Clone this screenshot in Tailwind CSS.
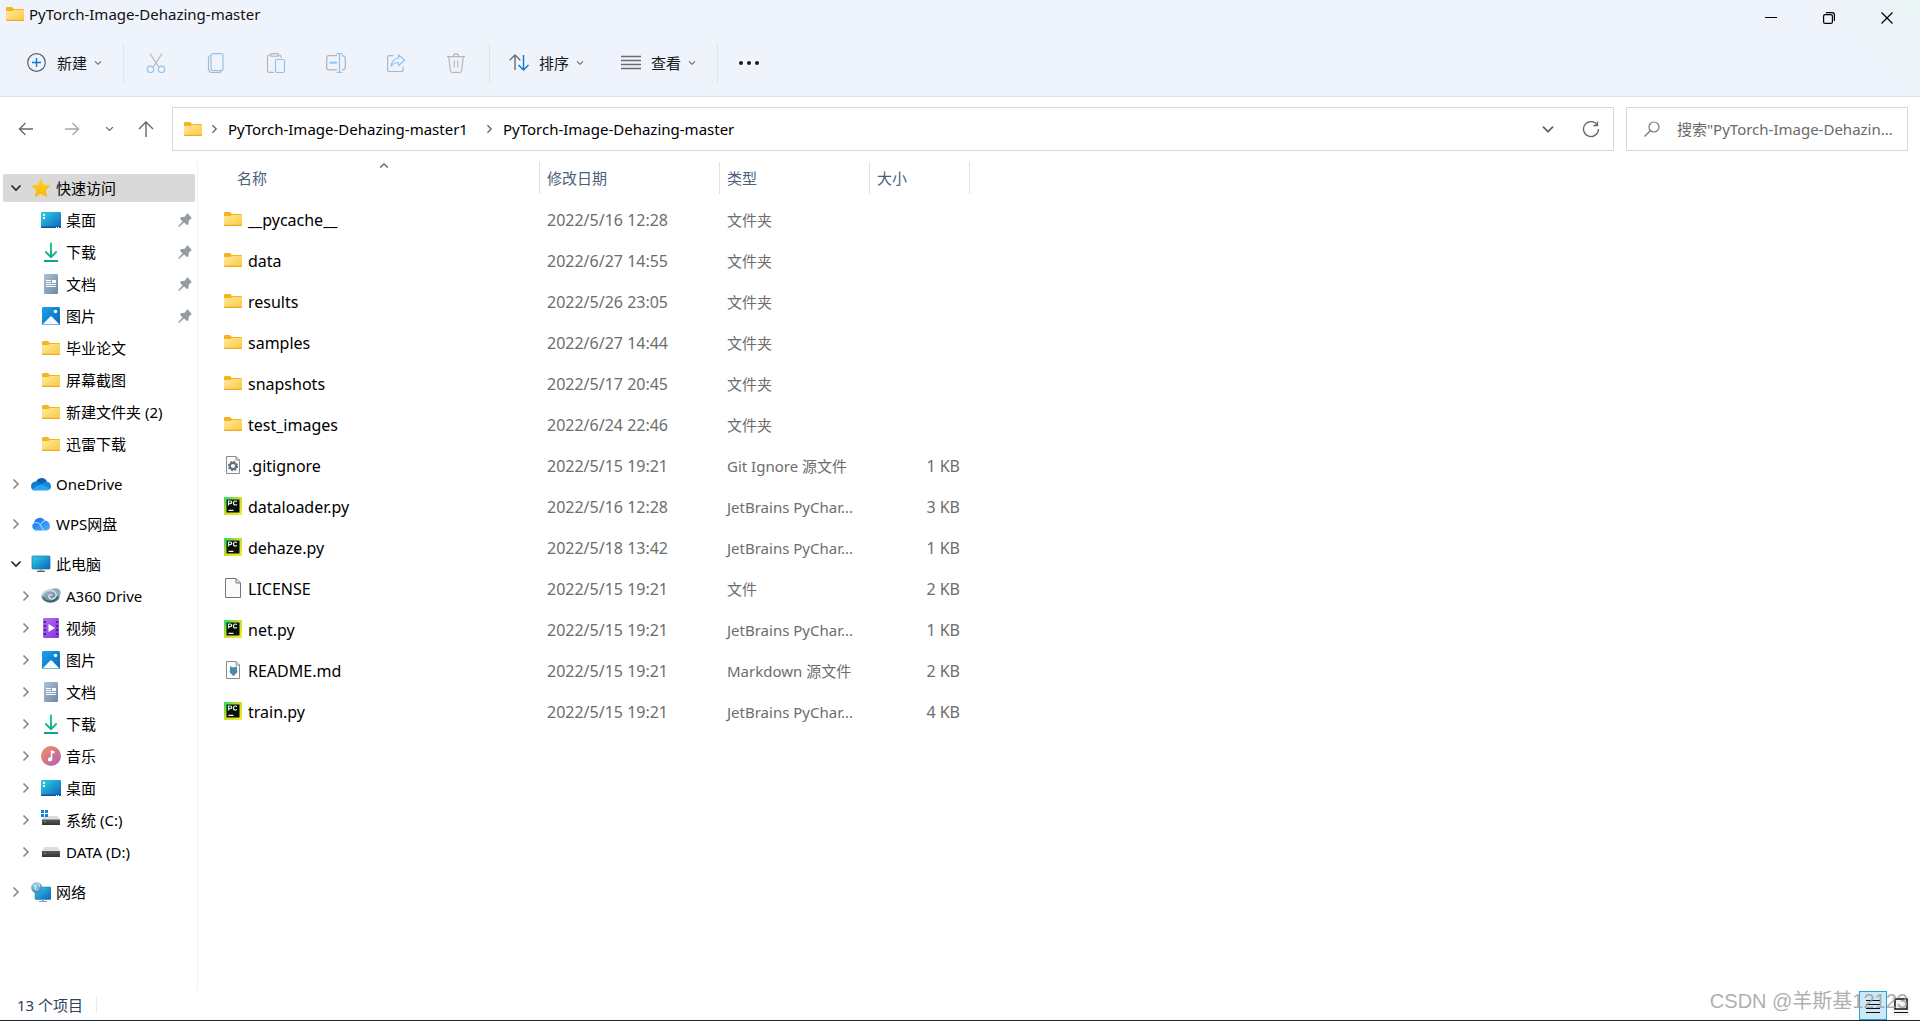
<!DOCTYPE html>
<html lang="zh-CN">
<head>
<meta charset="utf-8">
<meta name="viewport" content="width=device-width, initial-scale=1">
<title>PyTorch-Image-Dehazing-master</title>
<script src="https://cdn.jsdelivr.net/npm/@tailwindcss/browser@4"></script>
</head>
<body class="relative flex min-h-screen flex-col bg-white font-['Noto_Sans','Noto_Sans_CJK_SC',sans-serif] text-[15px] leading-5 text-black">

<!-- Icon library -->
<svg class="absolute size-0" aria-hidden="true">
  <defs>
    <linearGradient id="g-folder" x1="0" y1="0" x2="1" y2="1"><stop offset="0" stop-color="#ffe9a0"/><stop offset="1" stop-color="#fdc83e"/></linearGradient>
    <linearGradient id="g-desk" x1="0" y1="0" x2="1" y2="1"><stop offset="0" stop-color="#30d2e6"/><stop offset="1" stop-color="#0a63bd"/></linearGradient>
    <linearGradient id="g-pic" x1="0" y1="0" x2="1" y2="1"><stop offset="0" stop-color="#1ba4ec"/><stop offset="1" stop-color="#0866b8"/></linearGradient>
    <linearGradient id="g-doc" x1="0" y1="0" x2="1" y2="1"><stop offset="0" stop-color="#afc2d6"/><stop offset="1" stop-color="#6c86a5"/></linearGradient>
    <linearGradient id="g-down" gradientUnits="userSpaceOnUse" x1="0" y1="0" x2="0" y2="20"><stop offset="0" stop-color="#33cf8c"/><stop offset="1" stop-color="#0f9f94"/></linearGradient>
    <linearGradient id="g-video" x1="0" y1="0" x2="1" y2="1"><stop offset="0" stop-color="#b66cf2"/><stop offset="1" stop-color="#8236e0"/></linearGradient>
    <linearGradient id="g-music" x1="0" y1="0" x2="1" y2="1"><stop offset="0" stop-color="#f79259"/><stop offset="1" stop-color="#ae5bbb"/></linearGradient>
    <linearGradient id="g-star" x1="0" y1="0" x2="0" y2="1"><stop offset="0" stop-color="#ffd21c"/><stop offset="1" stop-color="#fbb50f"/></linearGradient>
    <linearGradient id="g-pc" x1="0" y1="0" x2="1" y2="1"><stop offset="0" stop-color="#12e36a"/><stop offset=".45" stop-color="#c6dc2c"/><stop offset="1" stop-color="#f4ee2c"/></linearGradient>
    <linearGradient id="g-wps" x1="0" y1="0" x2="1" y2="1"><stop offset="0" stop-color="#0a6df5"/><stop offset="1" stop-color="#55b1fb"/></linearGradient>
    <linearGradient id="g-drive" x1="0" y1="0" x2="0" y2="1"><stop offset="0" stop-color="#5a5a5a"/><stop offset="1" stop-color="#343434"/></linearGradient>
    <radialGradient id="g-globe" cx=".4" cy=".3" r=".8"><stop offset="0" stop-color="#a5d6ea"/><stop offset="1" stop-color="#2a7fae"/></radialGradient>
    <linearGradient id="g-a360" x1="0" y1="0" x2="1" y2="1"><stop offset="0" stop-color="#b5c9d3"/><stop offset="1" stop-color="#446b80"/></linearGradient>
  </defs>
  <symbol id="i-folder" viewBox="0 0 18 18"><path d="M0 3.200Q0 2 1.200 2H6l2 2h9q1 0 1 1v5H0z" fill="#f7b31c"/><path d="M0 6h6.500L8 5h10v10q0 1-1 1H1q-1 0-1-1z" fill="url(#g-folder)"/><path d="M0 14.800q0 1.200 1 1.200h16q1 0 1-1.200z" fill="#efa926"/></symbol>
  <symbol id="i-desktop" viewBox="0 0 20 20"><rect y="2" width="20" height="16" rx="1.200" fill="url(#g-desk)"/><path d="M0 16.500h20v.5q0 1-1 1H1q-1 0-1-1z" fill="#0b5794"/><path d="M2 4h2v2H2zM2 7h2v2H2zM15 17h1v1h-1zM17 17h1v1h-1z" fill="#fff"/></symbol>
  <symbol id="i-download" viewBox="0 0 20 20" fill="none" stroke="url(#g-down)" stroke-width="2"><path d="M10 .5V15M4.300 9.500L10 15.200l5.700-5.700M3 19h14"/></symbol>
  <symbol id="i-document" viewBox="0 0 20 20"><rect x="3" y="0" width="14" height="20" rx="1.200" fill="url(#g-doc)"/><path d="M5 6h5v1H5zM5 8h5v1H5zM5 10h10v1H5zM5 12h10v1H5zM11 6h4v3h-4z" fill="#fff"/></symbol>
  <symbol id="i-picture" viewBox="0 0 20 20"><rect x="1" y="1" width="18" height="18" rx="1.200" fill="url(#g-pic)"/><path d="M2 18l7-7.300q1-1 2 0L18 18q-.3.500-1 .500H3q-.7 0-1-.500z" fill="#f3f9ff"/><circle cx="14.500" cy="5.500" r="1.700" fill="#fff"/></symbol>
  <symbol id="i-star" viewBox="0 0 20 20"><path d="M10 1.300l2.600 5.900 6.400.7-4.700 4.300 1.300 6.300L10 15.300l-5.600 3.200 1.300-6.300L1 7.900l6.400-.7z" fill="url(#g-star)" stroke="url(#g-star)" stroke-linejoin="round"/></symbol>
  <symbol id="i-pin" viewBox="0 0 14 14"><path d="M8.300.8q.7-.8 1.500 0l3.400 3.400q.8.800 0 1.500l-.7.300-1.600 1.600-.5 3.600-1.200 1.100-3.100-2.900-4.800 4.400L0 13.300l4.500-4.900-2.700-3L3 4.200l3.700-.5 1.400-1.600z" fill="#939ca3"/></symbol>
  <symbol id="i-onedrive" viewBox="0 0 20 20"><path d="M5 8.500a5.800 5.800 0 0 1 11-.8L8 14z" fill="#0f5fb4"/><path d="M4.500 7.500q4-.3 7.500 3.500L3 16.500Q0 15.500 0 12q.2-4 4.500-4.500z" fill="#1279d0"/><path d="M11 10q2-2.500 5-2.300 4 .8 4 4.800 0 2.300-1.500 3L9 12z" fill="#1588de"/><path d="M1.200 15Q5 11.700 10 10.500q4 1 9.300 4-1 2-3.300 2H4q-2 0-2.800-1.500z" fill="#2aa5ec"/></symbol>
  <symbol id="i-wps" viewBox="0 0 20 20"><path d="M3 9A6 6 0 0 1 14 6.500a5.500 5.500 0 0 1 5 5.500q0 4.500-4.500 4.500h-10A4.200 4.200 0 0 1 3 9z" fill="url(#g-wps)"/><path d="M3.500 9Q8 7.500 10 12q1 3 3 4.500M9.500 10.500Q11 7 14.500 6.500" stroke="#e3f1ff" stroke-width=".8" fill="none"/></symbol>
  <symbol id="i-pc" viewBox="0 0 20 20"><rect x="1" y="2" width="18" height="13" rx=".8" fill="url(#g-desk)" stroke="#1e6d9c" stroke-width=".7"/><path d="M8.500 15.500h3V17h-3z" fill="#9aa3aa"/><path d="M6 16.700h8V18H6z" fill="#58646d"/></symbol>
  <symbol id="i-a360" viewBox="0 0 20 20"><ellipse cx="9.500" cy="10" rx="9.300" ry="6.800" fill="url(#g-a360)"/><path d="M10 3q8-2.500 9.500 2.500.8 4-3.500 7.500 1-6-6-10z" fill="#8faab8"/><path d="M1.500 9Q4 3.500 10.500 4.500q5.500 1.500 4.500 5.500-2 4-6 2.500-2.500-2 0-3.500 1.500-.5 2.300.5" fill="none" stroke="#d4e0e6" stroke-width="1.500"/><path d="M2 11q2.500 5 8.500 4.300 5-1 6.500-5" fill="none" stroke="#365b70" stroke-width="1.500"/></symbol>
  <symbol id="i-video" viewBox="0 0 20 20"><rect x="2" width="16" height="20" rx="1.200" fill="url(#g-video)"/><path d="M7.500 6v8l6.500-4z" fill="#fff"/><path d="M3 3h2v2H3zM3 7h2v2H3zM3 11h2v2H3zM3 15h2v2H3zM15 3h2v2h-2zM15 7h2v2h-2zM15 11h2v2h-2zM15 15h2v2h-2z" fill="#4c2391"/></symbol>
  <symbol id="i-music" viewBox="0 0 20 20"><circle cx="10" cy="10" r="10" fill="url(#g-music)"/><path d="M9.800 4.200l3.700 1V7.500l-2.200-.6v6.300a2.200 2 0 1 1-1.500-1.800z" fill="#fff"/></symbol>
  <symbol id="i-cdrive" viewBox="0 0 20 20"><path d="M3.500 6h13L19 10H1z" fill="#dcdde1"/><rect x="1" y="9.500" width="18" height="5.500" fill="url(#g-drive)"/><circle cx="4" cy="11.800" r=".8" fill="#2fe33d"/><path d="M0 0h3v3H0zM4 0h3v3H4zM0 4h3v3H0zM4 4h3v3H4z" fill="#1685d8"/></symbol>
  <symbol id="i-ddrive" viewBox="0 0 20 20"><path d="M3.500 5h13L19 9.500H1z" fill="#dcdde1"/><rect x="1" y="9" width="18" height="6" fill="url(#g-drive)"/><circle cx="4" cy="11.500" r=".8" fill="#2fe33d"/></symbol>
  <symbol id="i-network" viewBox="0 0 20 20"><rect x="4" y="5" width="16" height="12.500" rx="1" fill="url(#g-desk)" stroke="#1b76ae" stroke-width=".5"/><path d="M11 17.500h2V19h-2zM8 19h8v1H8z" fill="#9aa3aa"/><circle cx="5.700" cy="5.700" r="5.500" fill="url(#g-globe)"/><path d="M2 3l3 1-1 3 3 1M6 1l3 2-1 2" fill="none" stroke="#e0f1f8" stroke-width=".9"/></symbol>
  <symbol id="i-gitignore" viewBox="0 0 18 18"><path d="M2.500.5h9.500l3.500 3.500v13.500h-13z" fill="#fcfcfc" stroke="#8b8b8b"/><path d="M12 .5V4h3.500" fill="none" stroke="#8b8b8b"/><circle cx="9" cy="10" r="3.200" fill="none" stroke="#5b7080" stroke-width="2.200"/><circle cx="9" cy="10" r="4.600" fill="none" stroke="#5b7080" stroke-width="1.200" stroke-dasharray="1.800 1.813"/></symbol>
  <symbol id="i-markdown" viewBox="0 0 18 18"><path d="M2.500.5h9.500l3.500 3.500v13.500h-13z" fill="#fcfcfc" stroke="#8b8b8b"/><path d="M12 .5V4h3.500" fill="none" stroke="#8b8b8b"/><path d="M6 5l2 1.200h3L13 5v5.500h1L9.500 15.200 5 10.500h1z" fill="#4a8bab"/></symbol>
  <symbol id="i-file" viewBox="0 0 18 20"><path d="M1.500.5H12l4.500 4.500v14.500h-15z" fill="#fafafa" stroke="#757575"/><path d="M12 .5V5h4.500" fill="none" stroke="#757575"/></symbol>
  <symbol id="i-pycharm" viewBox="0 0 18 18"><rect width="18" height="18" rx=".5" fill="url(#g-pc)"/><rect x="2.500" y="2.500" width="13" height="13" fill="#06110a"/><path d="M4.500 8.500V4h1.700q1.500 0 1.500 1.300T6.200 6.700H4.500M12.800 4.800Q12.200 4 11.200 4 9.500 4 9.500 6t1.700 2q1 0 1.600-.7M4.500 13.300h5" fill="none" stroke="#e9f3ea" stroke-width="1.200"/></symbol>
  <symbol id="i-right" viewBox="0 0 8 12"><path d="M1.500 1.500L6 6l-4.500 4.500" fill="none" stroke="currentColor" stroke-width="1.600"/></symbol>
  <symbol id="i-down" viewBox="0 0 12 8"><path d="M1.500 1.500L6 6l4.500-4.500" fill="none" stroke="currentColor" stroke-width="1.600"/></symbol>
</svg>

<header class="border-b border-[#d9dfe6] bg-[#eff3fb] bg-linear-[225deg] from-[#eaf5f6] from-0% to-[#eff3fb] to-5%">
  <div class="flex h-9 items-start justify-between">
    <h1 class="flex h-7 items-center gap-[5px] pl-1.5 text-[#111]">
      <svg class="size-[18px]"><use href="#i-folder"/></svg>PyTorch-Image-Dehazing-master
    </h1>
    <div class="flex h-9 pr-1">
      <button aria-label="最小化" class="grid w-[58px] place-items-center"><svg class="size-3" viewBox="0 0 12 12"><path d="M0 5.500h12" stroke="#000"/></svg></button>
      <button aria-label="还原" class="grid w-[58px] place-items-center"><svg class="size-3" viewBox="0 0 12 12" fill="none" stroke="#000" stroke-width="1.200"><rect x=".6" y="2.600" width="8.800" height="8.800" rx="1.500"/><path d="M3 .6h6.200q2.200 0 2.200 2.200V9"/></svg></button>
      <button aria-label="关闭" class="grid w-[58px] place-items-center"><svg class="size-3" viewBox="0 0 12 12"><path d="M.5.5l11 11M11.500.5l-11 11" stroke="#000" stroke-width="1.200"/></svg></button>
    </div>
  </div>
  <div class="flex h-[60px] items-center pb-1.5 text-[#191919]">
    <button class="flex w-[123px] items-center pl-[27px]">
      <svg class="mr-[10px] size-5" viewBox="0 0 20 20" fill="none"><circle cx="9.500" cy="9.500" r="8.800" stroke="#5c5f66" stroke-width="1.200"/><path d="M9.500 5v9M5 9.500h9" stroke="#0a7ad6" stroke-width="1.400"/></svg>新建
      <svg class="ml-[7px] h-[6px] w-2 text-[#666]"><use href="#i-down"/></svg>
    </button>
    <div class="flex h-10 items-center border-x border-[#dfe3ea] pr-[3px] pl-[2px]">
      <button aria-label="剪切" class="grid w-[60px] place-items-center"><svg class="size-5" viewBox="0 0 20 20" fill="none" stroke-width="1.200"><path d="M4 .5l9 14M16 .5L7 14.500" stroke="#b3b7bd"/><circle cx="4.500" cy="16.300" r="3.200" stroke="#8ec5ee"/><circle cx="15.500" cy="16.300" r="3.200" stroke="#8ec5ee"/></svg></button>
      <button aria-label="复制" class="grid w-[60px] place-items-center"><svg class="size-5" viewBox="0 0 20 20" fill="none" stroke-width="1.200"><path d="M4.500 2.500Q2.500 3 2.500 5v10.500q0 4 4 4h6.500q1.500 0 2-1.500" stroke="#b3b7bd"/><rect x="5" y=".6" width="12" height="17" rx="2" stroke="#8ec5ee"/></svg></button>
      <button aria-label="粘贴" class="grid w-[60px] place-items-center"><svg class="size-5" viewBox="0 0 20 20" fill="none" stroke-width="1.200"><path d="M4.500 2H3Q1.500 2 1.500 3.500v14.500q0 1.400 1.500 1.400h5M12 2h1.500q1.500 0 1.500 1.500V5M5.500.6h6q1 0 1 1.300t-1 1.300h-6q-1 0-1-1.300t1-1.300z" stroke="#b3b7bd"/><rect x="9.500" y="6.500" width="9" height="13" rx="1.500" stroke="#8ec5ee"/></svg></button>
      <button aria-label="重命名" class="grid w-[60px] place-items-center"><svg class="size-5" viewBox="0 0 20 20" fill="none" stroke-width="1.300"><path d="M11 2.600H3Q.7 2.600.7 5v9.500q0 2.300 2.300 2.300h8M16 2.600q3.300 0 3.300 2.700v9q0 2.500-3.300 2.500" stroke="#b3b7bd"/><path d="M13.500.6v18.800M10.500.6h6M10.500 19.400h6" stroke="#8ec5ee"/><path d="M3.500 9.700H11" stroke="#8ec5ee" stroke-width="2"/></svg></button>
      <button aria-label="共享" class="grid w-[60px] place-items-center"><svg class="size-5" viewBox="0 0 20 20" fill="none" stroke-width="1.200" stroke-linejoin="round"><path d="M7.500 2.600h-4Q1.600 2.600 1.600 4.500v12q0 2 2 2h11.500q2 0 2-2V13.500" stroke="#b3b7bd"/><path d="M12.500 5V1.800l6.200 5.400-6.200 5.400V9.500Q8 9.200 5 13.300 6 6 12.500 5z" stroke="#8ec5ee"/></svg></button>
      <button aria-label="删除" class="grid w-[60px] place-items-center"><svg class="size-5" viewBox="0 0 20 20" fill="none" stroke="#b3b7bd" stroke-width="1.200"><path d="M1 3.600h18M7.500 3.500Q7.500.8 10 .8t2.500 2.700M2.800 3.600L4.300 17.500q.2 1.900 2 1.900h7.400q1.800 0 2-1.900L17.200 3.600M8.200 7.500v7M11.800 7.500v7"/></svg></button>
    </div>
    <button class="flex w-[112px] items-center pl-[19px]">
      <svg class="mr-[10px] size-5" viewBox="0 0 20 20" fill="none" stroke-width="1.400"><path d="M6 17V2M.7 7.300L6 2l5.300 5.300" stroke="#6b6f76"/><path d="M14.500 2v15M9.500 12l5 5 5-5" stroke="#0a7ad6"/></svg>排序
      <svg class="ml-[7px] h-[6px] w-2 text-[#666]"><use href="#i-down"/></svg>
    </button>
    <button class="flex h-10 w-[116px] items-center border-r border-[#dfe3ea] pl-[19px]">
      <svg class="mr-[10px] size-5" viewBox="0 0 20 20" stroke="#6a6a72" stroke-width="1.400"><path d="M0 3.500h20M0 7.500h20M0 11.500h20M0 15.500h20"/></svg>查看
      <svg class="ml-[7px] h-[6px] w-2 text-[#666]"><use href="#i-down"/></svg>
    </button>
    <button aria-label="更多" class="ml-[21px]"><svg class="size-5" viewBox="0 0 20 20" fill="#1a1a1a"><circle cx="2" cy="10" r="2"/><circle cx="10" cy="10" r="2"/><circle cx="18" cy="10" r="2"/></svg></button>
  </div>
</header>

<div class="flex items-center pt-[10px] pr-3 pb-[11px]">
  <nav aria-label="导航" class="flex w-[172px] shrink-0 items-center text-[#666]">
    <button aria-label="后退" class="ml-[18px]"><svg class="size-4" viewBox="0 0 16 16" fill="none" stroke="currentColor" stroke-width="1.300"><path d="M15 8H1.500M7.500 2L1.500 8l6 6"/></svg></button>
    <button aria-label="前进" class="ml-[30px] text-[#a5a5a5]"><svg class="size-4" viewBox="0 0 16 16" fill="none" stroke="currentColor" stroke-width="1.300"><path d="M1 8h13.500M8.500 2l6 6-6 6"/></svg></button>
    <button aria-label="最近浏览的位置" class="ml-[25px]"><svg class="h-[6px] w-[9px]"><use href="#i-down"/></svg></button>
    <button aria-label="上移" class="ml-6"><svg class="size-4" viewBox="0 0 16 16" fill="none" stroke="currentColor" stroke-width="1.400"><path d="M8 16V1M1 8l7-7 7 7"/></svg></button>
  </nav>
  <div class="flex h-11 min-w-0 flex-1 items-center border border-[#d9d9d9] pr-[13px] pl-[11px]">
    <svg class="size-[18px]"><use href="#i-folder"/></svg>
    <svg class="ml-[9px] h-[10px] w-[7px] text-[#666]"><use href="#i-right"/></svg>
    <a href="#" class="ml-[10px] pb-px">PyTorch-Image-Dehazing-master1</a>
    <svg class="ml-[18px] h-[10px] w-[7px] text-[#666]"><use href="#i-right"/></svg>
    <a href="#" class="ml-[10px] pb-px">PyTorch-Image-Dehazing-master</a>
    <button aria-label="历史记录" class="ml-auto"><svg class="h-[9px] w-[14px] text-[#666]"><use href="#i-down"/></svg></button>
    <button aria-label="刷新" class="ml-[27px]"><svg class="size-[18px]" viewBox="0 0 18 18" fill="none" stroke="#666" stroke-width="1.300"><path d="M15.300 5A7.500 7.500 0 1 0 16.500 9M15.500 1.500v4h-4.200"/></svg></button>
  </div>
  <label class="ml-3 flex h-11 w-[282px] items-center border border-[#d9d9d9] pl-[17px]">
    <svg class="size-4 shrink-0" viewBox="0 0 16 16" fill="none" stroke="#777" stroke-width="1.200"><circle cx="10" cy="6" r="5"/><path d="M6.500 9.500L.5 15.500"/></svg>
    <input type="search" aria-label="搜索" class="ml-[17px] min-w-0 flex-1 outline-none placeholder:text-[#6a6a6a]" placeholder='搜索"PyTorch-Image-Dehazin...'>
  </label>
</div>

<div class="flex flex-1">
  <nav aria-label="导航窗格" class="w-[198px] shrink-0 border-r border-[#f3f3f3] pt-2.5">
    <ul>
      <li><a href="#" class="mr-[2px] ml-[3px] my-[2px] flex h-7 items-center rounded-xs bg-[#d9d9d9] pl-[7px]"><svg class="h-2 w-3 text-[#222]"><use href="#i-down"/></svg><svg class="mr-[5px] ml-[9px] size-5"><use href="#i-star"/></svg>快速访问</a>
        <ul>
          <li><a href="#" class="flex h-8 items-center gap-[5px] pr-[5px] pl-[41px]"><svg class="size-5"><use href="#i-desktop"/></svg>桌面<svg class="ml-auto size-[14px]"><use href="#i-pin"/></svg></a></li>
          <li><a href="#" class="flex h-8 items-center gap-[5px] pr-[5px] pl-[41px]"><svg class="size-5"><use href="#i-download"/></svg>下载<svg class="ml-auto size-[14px]"><use href="#i-pin"/></svg></a></li>
          <li><a href="#" class="flex h-8 items-center gap-[5px] pr-[5px] pl-[41px]"><svg class="size-5"><use href="#i-document"/></svg>文档<svg class="ml-auto size-[14px]"><use href="#i-pin"/></svg></a></li>
          <li><a href="#" class="flex h-8 items-center gap-[5px] pr-[5px] pl-[41px]"><svg class="size-5"><use href="#i-picture"/></svg>图片<svg class="ml-auto size-[14px]"><use href="#i-pin"/></svg></a></li>
          <li><a href="#" class="flex h-8 items-center gap-[6px] pl-[42px]"><svg class="size-[18px]"><use href="#i-folder"/></svg>毕业论文</a></li>
          <li><a href="#" class="flex h-8 items-center gap-[6px] pl-[42px]"><svg class="size-[18px]"><use href="#i-folder"/></svg>屏幕截图</a></li>
          <li><a href="#" class="flex h-8 items-center gap-[6px] pl-[42px]"><svg class="size-[18px]"><use href="#i-folder"/></svg>新建文件夹 (2)</a></li>
          <li><a href="#" class="flex h-8 items-center gap-[6px] pl-[42px]"><svg class="size-[18px]"><use href="#i-folder"/></svg>迅雷下载</a></li>
        </ul>
      </li>
      <li class="mt-2"><a href="#" class="flex h-8 items-center pl-3"><svg class="h-3 w-2 text-[#888]"><use href="#i-right"/></svg><svg class="mr-[5px] ml-[11px] size-5"><use href="#i-onedrive"/></svg>OneDrive</a></li>
      <li class="mt-2"><a href="#" class="flex h-8 items-center pl-3"><svg class="h-3 w-2 text-[#888]"><use href="#i-right"/></svg><svg class="mr-[5px] ml-[11px] size-5"><use href="#i-wps"/></svg>WPS网盘</a></li>
      <li class="mt-2"><a href="#" class="flex h-8 items-center pl-2.5"><svg class="h-2 w-3 text-[#222]"><use href="#i-down"/></svg><svg class="mr-[5px] ml-[9px] size-5"><use href="#i-pc"/></svg>此电脑</a>
        <ul>
          <li><a href="#" class="flex h-8 items-center pl-[22px]"><svg class="h-3 w-2 text-[#888]"><use href="#i-right"/></svg><svg class="mr-[5px] ml-[11px] size-5"><use href="#i-a360"/></svg>A360 Drive</a></li>
          <li><a href="#" class="flex h-8 items-center pl-[22px]"><svg class="h-3 w-2 text-[#888]"><use href="#i-right"/></svg><svg class="mr-[5px] ml-[11px] size-5"><use href="#i-video"/></svg>视频</a></li>
          <li><a href="#" class="flex h-8 items-center pl-[22px]"><svg class="h-3 w-2 text-[#888]"><use href="#i-right"/></svg><svg class="mr-[5px] ml-[11px] size-5"><use href="#i-picture"/></svg>图片</a></li>
          <li><a href="#" class="flex h-8 items-center pl-[22px]"><svg class="h-3 w-2 text-[#888]"><use href="#i-right"/></svg><svg class="mr-[5px] ml-[11px] size-5"><use href="#i-document"/></svg>文档</a></li>
          <li><a href="#" class="flex h-8 items-center pl-[22px]"><svg class="h-3 w-2 text-[#888]"><use href="#i-right"/></svg><svg class="mr-[5px] ml-[11px] size-5"><use href="#i-download"/></svg>下载</a></li>
          <li><a href="#" class="flex h-8 items-center pl-[22px]"><svg class="h-3 w-2 text-[#888]"><use href="#i-right"/></svg><svg class="mr-[5px] ml-[11px] size-5"><use href="#i-music"/></svg>音乐</a></li>
          <li><a href="#" class="flex h-8 items-center pl-[22px]"><svg class="h-3 w-2 text-[#888]"><use href="#i-right"/></svg><svg class="mr-[5px] ml-[11px] size-5"><use href="#i-desktop"/></svg>桌面</a></li>
          <li><a href="#" class="flex h-8 items-center pl-[22px]"><svg class="h-3 w-2 text-[#888]"><use href="#i-right"/></svg><svg class="mr-[5px] ml-[11px] size-5"><use href="#i-cdrive"/></svg>系统 (C:)</a></li>
          <li><a href="#" class="flex h-8 items-center pl-[22px]"><svg class="h-3 w-2 text-[#888]"><use href="#i-right"/></svg><svg class="mr-[5px] ml-[11px] size-5"><use href="#i-ddrive"/></svg>DATA (D:)</a></li>
        </ul>
      </li>
      <li class="mt-2"><a href="#" class="flex h-8 items-center pl-3"><svg class="h-3 w-2 text-[#888]"><use href="#i-right"/></svg><svg class="mr-[5px] ml-[11px] size-5"><use href="#i-network"/></svg>网络</a></li>
    </ul>
  </nav>

  <main class="min-w-0 flex-1">
    <table class="w-[772px] table-fixed text-[#6d6d6d]">
      <colgroup><col class="w-[342px]"><col class="w-[180px]"><col class="w-[150px]"><col class="w-[100px]"></colgroup>
      <thead class="text-left text-[#4c607a]">
        <tr class="h-[37px] align-top">
          <th class="relative p-0 font-normal" aria-sort="ascending"><button class="flex h-8 w-full items-center border-r border-[#e2e2e2] pl-[39px]">名称</button><svg class="absolute top-0 left-[181px] h-[7px] w-[10px] rotate-180"><use href="#i-down"/></svg></th>
          <th class="p-0 font-normal"><button class="flex h-8 w-full items-center border-r border-[#e2e2e2] pl-[7px]">修改日期</button></th>
          <th class="p-0 font-normal"><button class="flex h-8 w-full items-center border-r border-[#e2e2e2] pl-[7px]">类型</button></th>
          <th class="p-0 font-normal"><button class="flex h-8 w-full items-center border-r border-[#e2e2e2] pl-[7px]">大小</button></th>
        </tr>
      </thead>
      <tbody>
        <tr class="h-[41px]"><td class="p-0 pl-[26px]"><a href="#" class="flex items-center gap-1.5 text-base/5 text-black"><svg class="mb-0.5 size-[18px]"><use href="#i-folder"/></svg>__pycache__</a></td><td class="p-0 pl-[7px] text-base/5">2022/5/16 12:28</td><td class="p-0 pl-[7px]">文件夹</td><td></td></tr>
        <tr class="h-[41px]"><td class="p-0 pl-[26px]"><a href="#" class="flex items-center gap-1.5 text-base/5 text-black"><svg class="mb-0.5 size-[18px]"><use href="#i-folder"/></svg>data</a></td><td class="p-0 pl-[7px] text-base/5">2022/6/27 14:55</td><td class="p-0 pl-[7px]">文件夹</td><td></td></tr>
        <tr class="h-[41px]"><td class="p-0 pl-[26px]"><a href="#" class="flex items-center gap-1.5 text-base/5 text-black"><svg class="mb-0.5 size-[18px]"><use href="#i-folder"/></svg>results</a></td><td class="p-0 pl-[7px] text-base/5">2022/5/26 23:05</td><td class="p-0 pl-[7px]">文件夹</td><td></td></tr>
        <tr class="h-[41px]"><td class="p-0 pl-[26px]"><a href="#" class="flex items-center gap-1.5 text-base/5 text-black"><svg class="mb-0.5 size-[18px]"><use href="#i-folder"/></svg>samples</a></td><td class="p-0 pl-[7px] text-base/5">2022/6/27 14:44</td><td class="p-0 pl-[7px]">文件夹</td><td></td></tr>
        <tr class="h-[41px]"><td class="p-0 pl-[26px]"><a href="#" class="flex items-center gap-1.5 text-base/5 text-black"><svg class="mb-0.5 size-[18px]"><use href="#i-folder"/></svg>snapshots</a></td><td class="p-0 pl-[7px] text-base/5">2022/5/17 20:45</td><td class="p-0 pl-[7px]">文件夹</td><td></td></tr>
        <tr class="h-[41px]"><td class="p-0 pl-[26px]"><a href="#" class="flex items-center gap-1.5 text-base/5 text-black"><svg class="mb-0.5 size-[18px]"><use href="#i-folder"/></svg>test_images</a></td><td class="p-0 pl-[7px] text-base/5">2022/6/24 22:46</td><td class="p-0 pl-[7px]">文件夹</td><td></td></tr>
        <tr class="h-[41px]"><td class="p-0 pl-[26px]"><a href="#" class="flex items-center gap-1.5 text-base/5 text-black"><svg class="mb-0.5 size-[18px]"><use href="#i-gitignore"/></svg>.gitignore</a></td><td class="p-0 pl-[7px] text-base/5">2022/5/15 19:21</td><td class="p-0 pl-[7px]">Git Ignore 源文件</td><td class="p-0 pr-[10px] text-right text-base/5">1 KB</td></tr>
        <tr class="h-[41px]"><td class="p-0 pl-[26px]"><a href="#" class="flex items-center gap-1.5 text-base/5 text-black"><svg class="mb-0.5 size-[18px]"><use href="#i-pycharm"/></svg>dataloader.py</a></td><td class="p-0 pl-[7px] text-base/5">2022/5/16 12:28</td><td class="p-0 pl-[7px]">JetBrains PyChar...</td><td class="p-0 pr-[10px] text-right text-base/5">3 KB</td></tr>
        <tr class="h-[41px]"><td class="p-0 pl-[26px]"><a href="#" class="flex items-center gap-1.5 text-base/5 text-black"><svg class="mb-0.5 size-[18px]"><use href="#i-pycharm"/></svg>dehaze.py</a></td><td class="p-0 pl-[7px] text-base/5">2022/5/18 13:42</td><td class="p-0 pl-[7px]">JetBrains PyChar...</td><td class="p-0 pr-[10px] text-right text-base/5">1 KB</td></tr>
        <tr class="h-[41px]"><td class="p-0 pl-[26px]"><a href="#" class="flex items-center gap-1.5 text-base/5 text-black"><svg class="mb-0.5 h-5 w-[18px]"><use href="#i-file"/></svg>LICENSE</a></td><td class="p-0 pl-[7px] text-base/5">2022/5/15 19:21</td><td class="p-0 pl-[7px]">文件</td><td class="p-0 pr-[10px] text-right text-base/5">2 KB</td></tr>
        <tr class="h-[41px]"><td class="p-0 pl-[26px]"><a href="#" class="flex items-center gap-1.5 text-base/5 text-black"><svg class="mb-0.5 size-[18px]"><use href="#i-pycharm"/></svg>net.py</a></td><td class="p-0 pl-[7px] text-base/5">2022/5/15 19:21</td><td class="p-0 pl-[7px]">JetBrains PyChar...</td><td class="p-0 pr-[10px] text-right text-base/5">1 KB</td></tr>
        <tr class="h-[41px]"><td class="p-0 pl-[26px]"><a href="#" class="flex items-center gap-1.5 text-base/5 text-black"><svg class="mb-0.5 size-[18px]"><use href="#i-markdown"/></svg>README.md</a></td><td class="p-0 pl-[7px] text-base/5">2022/5/15 19:21</td><td class="p-0 pl-[7px]">Markdown 源文件</td><td class="p-0 pr-[10px] text-right text-base/5">2 KB</td></tr>
        <tr class="h-[41px]"><td class="p-0 pl-[26px]"><a href="#" class="flex items-center gap-1.5 text-base/5 text-black"><svg class="mb-0.5 size-[18px]"><use href="#i-pycharm"/></svg>train.py</a></td><td class="p-0 pl-[7px] text-base/5">2022/5/15 19:21</td><td class="p-0 pl-[7px]">JetBrains PyChar...</td><td class="p-0 pr-[10px] text-right text-base/5">4 KB</td></tr>
      </tbody>
    </table>
  </main>
</div>

<footer class="flex h-[30px] items-center border-b border-[#1d2733] pl-[17px] text-[#2b4160]">
  <p class="mb-0.5 border-r border-[#ececec] pr-[13px] leading-4">13 个项目</p>
  <div class="mr-[10px] ml-auto flex items-center gap-[5px]">
    <button aria-label="详细信息" class="grid h-[29px] w-7 place-items-center border border-[#26a0da] bg-[#cfe8f6]"><svg class="size-4" viewBox="0 0 16 16" stroke="#111"><path d="M1 2.500h14M1 6.500h14M1 10.500h14M1 14.500h14"/></svg></button>
    <button aria-label="大图标" class="grid h-5 w-[18px] place-items-center bg-[#f3f3f3]"><svg class="size-4" viewBox="0 0 16 16" fill="none" stroke="#111"><rect x="2" y="1" width="12" height="10" stroke-width="1.500"/><path d="M1 14.500h14"/></svg></button>
  </div>
</footer>

<p class="pointer-events-none absolute right-[12px] bottom-1.5 font-['Liberation_Sans','Noto_Sans_CJK_SC',sans-serif] text-xl leading-7 text-[#9a9a9a]/80">CSDN @羊斯基12123</p>
</body>
</html>
